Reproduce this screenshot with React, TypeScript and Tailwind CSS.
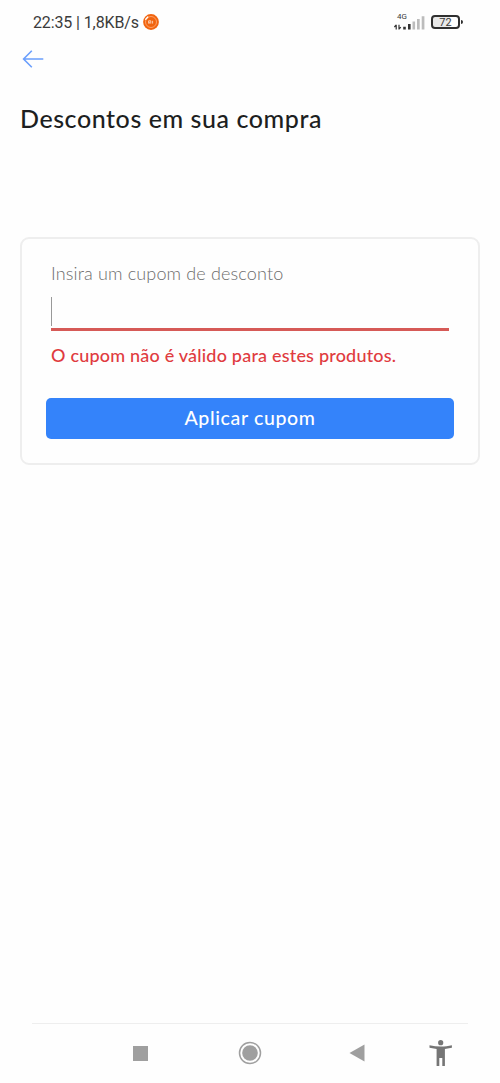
import React from "react";

function StatusBar() {
  return (
    <header className="flex h-[46px] items-center pr-[37px] pl-[33px] font-[Roboto,sans-serif] text-[#3b3b3b]">
      <span className="whitespace-pre text-[16px] leading-5 tracking-[-0.12px]">22:35 | 1,8KB/s</span>
      <svg className="ml-[4px] -mt-[2px]" width="16" height="16" viewBox="0 0 16 16" aria-hidden="true">
        <circle cx="8" cy="8" r="7.9" fill="#f1640f" />
        <circle cx="8" cy="8" r="5.5" fill="none" stroke="#ffad7a" strokeWidth="0.8" />
        <path d="M2.7 5.2 4.8 3" stroke="#fff" strokeWidth="1.3" strokeLinecap="round" />
        <path d="M5.6 9.6V6.8h2.2v2.8M6.7 7.8v1.8M9.6 6.8v2.8" fill="none" stroke="#ffe3d0" strokeWidth="0.8" />
      </svg>
      <div className="ml-auto flex items-end">
        <div className="flex h-[20px] w-[32px] flex-col">
          <span className="pl-[3px] text-[8px] leading-[8px]">4G</span>
          <svg className="-mt-[8px] h-[20px] w-[32px] shrink-0" viewBox="0 0 32 20" aria-hidden="true">
            <path d="M2.2 11.8v4.8M.4 14 2.2 12M5 11.8v4.8M6.8 14.2 5 16.2" stroke="#333" strokeWidth="1.2" fill="none" />
            <path d="M9.2 13.8h2.6v2.8H9.2zM14 11h2.6v5.6H14z" fill="#333" />
            <path d="M18.5 8.5h2.6v8.1h-2.6zM23 6h2.7v10.6H23zM27.7 3.3h2.7v13.3h-2.7z" fill="#bcbcbc" />
          </svg>
        </div>
        <div className="ml-[5px] flex h-[20px] items-center">
          <div className="-mt-[2px] flex h-[14px] w-[29px] items-center justify-center rounded-[4px] border-2 border-[#303030] bg-gradient-to-r from-[#e9e9e9] from-70% to-white to-70% text-[11px] leading-none">
            72
          </div>
          <div className="-mt-[2px] ml-px h-[4px] w-[2px] rounded-r-sm bg-[#303030]" />
        </div>
      </div>
    </header>
  );
}

function NavigationBar() {
  return (
    <nav className="mx-[32px] mt-auto flex h-[60px] items-center border-t border-[#eeeeee] pb-px pl-[101px]">
      <button aria-label="Recentes" className="h-[15px] w-[15px] bg-[#9f9f9f]" />
      <button aria-label="Início" className="ml-[90px]">
        <svg width="24" height="24" viewBox="0 0 24 24">
          <circle cx="12" cy="12" r="10.5" fill="none" stroke="#9f9f9f" strokeWidth="1.5" />
          <circle cx="12" cy="12" r="7.8" fill="#9f9f9f" />
        </svg>
      </button>
      <button aria-label="Voltar" className="ml-[87px]">
        <svg width="16" height="18" viewBox="0 0 16 18">
          <path d="M15.5.5v17L.5 9z" fill="#9f9f9f" />
        </svg>
      </button>
      <button aria-label="Acessibilidade" className="ml-[64px]">
        <svg width="24" height="26" viewBox="0 0 24 26">
          <circle cx="11.7" cy="2.7" r="2.6" fill="#757575" />
          <path d="M.5 5.2C8 7 16 7 22.9 5.2v2.6L15.9 9v17h-2.6v-8h-3v8H7.6V9L.5 7.8z" fill="#757575" />
        </svg>
      </button>
    </nav>
  );
}

export default function App() {
  return (
    <div className="flex h-[1083px] w-[500px] flex-col overflow-hidden bg-[#fefefe] font-[Lato,sans-serif]">
      <StatusBar />
      <button aria-label="Voltar" className="ml-[22px] mt-[3px] h-[20px] w-[22px]">
        <svg width="22" height="20" viewBox="0 0 22 20" fill="none" stroke="#6b9ffc" strokeWidth="1.6">
          <path d="M21.3 10H1.8M9.8 1.8 1.6 10l8.2 8.2" />
        </svg>
      </button>
      <main className="px-[20px]">
        <h1 className="mt-[33px] whitespace-nowrap text-[25px] font-medium leading-8 tracking-[0.56px] text-[#1d1f1f]">
          Descontos em sua compra
        </h1>
        <section className="mt-[103px] h-[228px] w-[460px] rounded-[9px] border-2 border-[#eeeeee] px-[24px] pt-[22px]">
          <form className="flex flex-col" onSubmit={(event) => event.preventDefault()}>
            <div className="mx-[5px]">
              <div className="whitespace-nowrap text-[18px] font-light leading-6 tracking-[0.15px] text-[#6c6c6c]">
                Insira um cupom de desconto
              </div>
              <div className="mt-[8px] flex h-[38px] border-b-[3px] border-[#d65a57] pt-[4px]">
                <span className="h-[29px] w-px bg-[#999999]" />
              </div>
              <p className="mt-[12px] whitespace-nowrap text-[18px] font-medium leading-6 tracking-[0.2px] text-[#e03b40]">
                O cupom não é válido para estes produtos.
              </p>
            </div>
            <button className="mt-[31px] h-[41px] rounded-[5px] bg-[#3483fa] pb-[2px] text-[19.5px] font-medium leading-6 tracking-[0.65px] text-white">
              Aplicar cupom
            </button>
          </form>
        </section>
      </main>
      <NavigationBar />
    </div>
  );
}
